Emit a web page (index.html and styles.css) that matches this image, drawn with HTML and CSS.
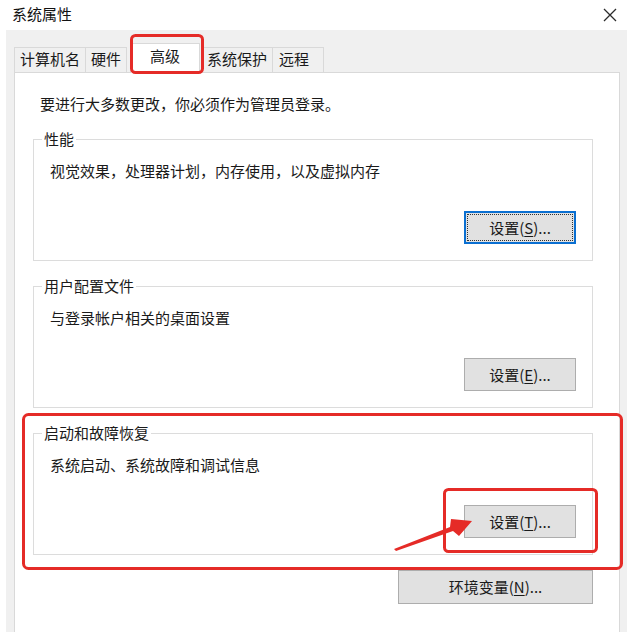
FILE: index.html
```html
<!DOCTYPE html>
<html lang="zh-CN">
<head>
<meta charset="utf-8">
<title>系统属性</title>
<link rel="stylesheet" href="styles.css">
</head>
<body>
<div class="window">
  <div class="titlebar">
    <span class="title">系统属性</span>
    <svg class="close" width="14" height="14" viewBox="0 0 14 14"><path d="M1 1L13 13M13 1L1 13" stroke="#2b2b2b" stroke-width="1.3" fill="none"/></svg>
  </div>
  <div class="dialog-body">
    <div class="tabs">
      <div class="tab">计算机名</div>
      <div class="tab">硬件</div>
      <div class="tab tab-active">高级</div>
      <div class="tab">系统保护</div>
      <div class="tab tab-last">远程</div>
    </div>
    <div class="panel">
      <p class="intro">要进行大多数更改，你必须作为管理员登录。</p>
      <fieldset class="group">
        <legend>性能</legend>
        <p class="desc">视觉效果，处理器计划，内存使用，以及虚拟内存</p>
        <div class="actions"><button class="btn btn-focus"><span class="focus-ring">设置(<u>S</u>)...</span></button></div>
      </fieldset>
      <fieldset class="group">
        <legend>用户配置文件</legend>
        <p class="desc">与登录帐户相关的桌面设置</p>
        <div class="actions"><button class="btn">设置(<u>E</u>)...</button></div>
      </fieldset>
      <fieldset class="group">
        <legend>启动和故障恢复</legend>
        <p class="desc">系统启动、系统故障和调试信息</p>
        <div class="actions"><button class="btn">设置(<u>T</u>)...</button></div>
      </fieldset>
      <div class="env-row"><button class="btn btn-wide">环境变量(<u>N</u>)...</button></div>
    </div>
  </div>
  <svg class="annotations" width="627" height="632" viewBox="0 0 627 632">
    <rect x="131.5" y="35.5" width="71" height="37" rx="4" ry="4" fill="none" stroke="#e52b27" stroke-width="3"/>
    <rect x="23.5" y="414.5" width="598" height="154" rx="5" ry="5" fill="none" stroke="#e52b27" stroke-width="3"/>
    <rect x="444.5" y="489.5" width="152" height="62" rx="4" ry="4" fill="none" stroke="#e52b27" stroke-width="3"/>
    <polygon points="396,551 453,531 459,536 472,521 451,519 450,527 394,549" fill="#e52b27"/>
  </svg>
</div>
</body>
</html>
```

FILE: styles.css
```css
* { box-sizing: border-box; }
html, body { margin: 0; padding: 0; background: #ffffff; }
body {
  font-family: "Noto Sans CJK SC", "Noto Sans", "Liberation Sans", sans-serif;
  font-size: 15px;
  line-height: 20px;
  color: #1a1a1a;
}
.window {
  position: relative;
  width: 627px;
  height: 632px;
  overflow: hidden;
  background: #ffffff;
}
.titlebar {
  height: 30px;
  display: flex;
  align-items: center;
  justify-content: space-between;
  padding: 0 10px 3px 12px;
}
.title { color: #111; }
.close { display: block; margin-top: 2px; }
.dialog-body {
  margin-left: 6px;
  height: 602px;
  background: #f0f0f0;
  padding: 17px 7px 0 8px;
}
.tabs {
  display: flex;
  align-items: flex-end;
  height: 25px;
  position: relative;
  z-index: 2;
}
.tab {
  height: 25px;
  padding: 1px 5px 0;
  border: 1px solid #d9d9d9;
  border-bottom: none;
  background: #f0f0f0;
  margin-left: -1px;
  color: #1a1a1a;
  white-space: nowrap;
}
.tab:first-child { margin-left: 0; }
.tab-active {
  height: 30px;
  margin-bottom: -1px;
  margin-left: 3px;
  padding: 2px 19px 0;
  background: #ffffff;
  border-color: #d9d9d9;
}
.tab-active + .tab { margin-left: 1px; }
.tab-last { padding: 1px 14px 0 6px; }
.panel {
  background: #ffffff;
  border: 1px solid #d9d9d9;
  height: 600px;
  padding: 21px 26px 0 18px;
}
.intro { margin: 0 0 15px 7px; }
.group {
  margin: 0 0 15px 0;
  padding: 12px 16px 16px 16px;
  border: 1px solid #dcdcdc;
  min-width: 0;
}
.group legend {
  padding: 0 2px;
  margin-left: -8px;
  color: #1a1a1a;
}
.desc { margin: 0; }
.actions {
  display: flex;
  justify-content: flex-end;
  margin-top: 30px;
}
.btn {
  font-family: inherit;
  font-size: 15px;
  line-height: 20px;
  color: #1a1a1a;
  width: 112px;
  height: 33px;
  background: #e1e1e1;
  border: 1px solid #adadad;
  padding: 0;
  margin: 0;
  display: flex;
  align-items: center;
  justify-content: center;
}
.btn u { text-underline-offset: 2px; }
.btn-focus {
  border: 2px solid #0a6fd1;
  padding: 1px;
}
.focus-ring {
  display: flex;
  align-items: center;
  justify-content: center;
  width: 100%;
  height: 100%;
  outline: 1px dotted #333;
  outline-offset: -1px;
}
.env-row {
  display: flex;
  justify-content: flex-end;
  margin-top: 7px;
}
.btn-wide {
  width: 195px;
  height: 34px;
}
.annotations {
  position: absolute;
  left: 0;
  top: 0;
  z-index: 5;
  pointer-events: none;
}
```
